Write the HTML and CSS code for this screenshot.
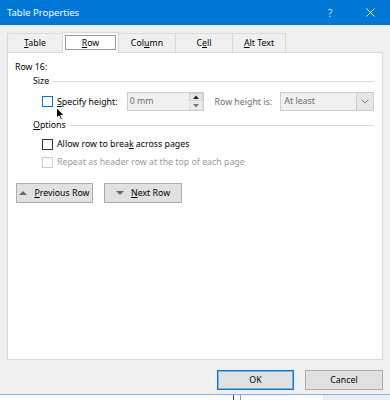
FILE: index.html
```html
<!DOCTYPE html>
<html>
<head>
<meta charset="utf-8">
<link rel="stylesheet" href="styles.css">
</head>
<body>
<div class="dialog">
  <div class="titlebar">
    <span class="title">Table Properties</span>
    <span class="help">?</span>
    <span class="close"><svg width="9" height="9" viewBox="0 0 9 9"><path d="M0.5 0.5L8.5 8.5M8.5 0.5L0.5 8.5" stroke="#fff" stroke-width="1" fill="none"/></svg></span>
  </div>
  <div class="body">
    <div class="tabs">
      <div class="tab t1"><span><u>T</u>able</span></div>
      <div class="tab t2 active"><span class="focus"><u>R</u>ow</span></div>
      <div class="tab t3"><span>Col<u>u</u>mn</span></div>
      <div class="tab t4"><span>C<u>e</u>ll</span></div>
      <div class="tab t5"><span><u>A</u>lt Text</span></div>
    </div>
    <div class="panel">
      <div class="rowlabel">Row 16:</div>
      <div class="group"><span>Size</span><div class="rule"></div></div>
      <div class="sizerow">
        <span class="cb hover"></span>
        <span class="lbl-specify"><u>S</u>pecify height:</span>
        <div class="spin">
          <span class="spin-text">0 mm</span>
          <div class="spin-btns">
            <span class="sb up"><svg width="6" height="4" viewBox="0 0 6 4"><path d="M0 4L3 0.5L6 4Z" fill="#222"/></svg></span>
            <span class="sb down"><svg width="6" height="4" viewBox="0 0 6 4"><path d="M0 0L3 3.5L6 0Z" fill="#777"/></svg></span>
          </div>
        </div>
        <span class="lbl-rhi">Row height is:</span>
        <div class="combo">
          <span class="combo-text">At least</span>
          <span class="combo-btn"><svg width="8" height="5" viewBox="0 0 8 5"><path d="M0.5 0.5L4 4L7.5 0.5" stroke="#777" stroke-width="1" fill="none"/></svg></span>
        </div>
      </div>
      <div class="group opt"><span><u>O</u>ptions</span><div class="rule"></div></div>
      <div class="chkrow first"><span class="cb"></span><span>Allow row to brea<u>k</u> across pages</span></div>
      <div class="chkrow disabled"><span class="cb"></span><span>Repeat as header row at the top of each page</span></div>
      <div class="navrow">
        <div class="btn prev"><svg width="8" height="4" viewBox="0 0 8 4"><path d="M0 4L4 0L8 4Z" fill="#6a6a6a"/></svg><span><u>P</u>revious Row</span></div>
        <div class="btn next"><svg width="8" height="4" viewBox="0 0 8 4"><path d="M0 0L4 4L8 0Z" fill="#6a6a6a"/></svg><span><u>N</u>ext Row</span></div>
      </div>
    </div>
    <div class="footer">
      <div class="btn ok">OK</div>
      <div class="btn cancel">Cancel</div>
    </div>
  </div>
</div>
<div class="under">
  <span class="u1"></span><span class="u2"></span><span class="u3"></span><span class="u4"></span><span class="u5"></span>
</div>
<svg class="cursor" width="10" height="14" viewBox="0 0 10 14"><path d="M0.5 0.5L0.5 11L3 8.8L4.8 12.8L6.4 12.1L4.7 8.3L8 8.3Z" fill="#000" stroke="#fff" stroke-width="1" stroke-linejoin="round"/></svg>
</body>
</html>
```
FILE: styles.css
```css
html, body {
  margin: 0;
  padding: 0;
}
body {
  width: 390px;
  height: 400px;
  overflow: hidden;
  position: relative;
  font-family: "Noto Sans", "Open Sans", sans-serif;
  font-size: 8.8px;
  color: #000;
  background: #fff;
}
u { text-decoration: underline; text-underline-offset: 1px; }

.dialog {
  width: 390px;
  height: 395px;
  box-sizing: border-box;
  background: #f0f0f0;
  border-bottom: 1px solid #7db5ea;
  display: flex;
  flex-direction: column;
}

.titlebar {
  height: 25px;
  flex: none;
  background: #0078d7;
  color: #fff;
  display: flex;
  align-items: center;
  padding-left: 7px;
}
.title { flex: 1; font-size: 9.5px; }
.help {
  width: 30px;
  margin-right: 5px;
  text-align: center;
  font-size: 11px;
  font-family: "Noto Sans", sans-serif;
  font-weight: 300;
}
.close {
  width: 40px;
  height: 25px;
  display: flex;
  align-items: center;
  justify-content: center;
}

.body {
  flex: 1;
  display: flex;
  flex-direction: column;
  padding: 0 7px;
}

.tabs {
  margin-top: 7px;
  height: 20px;
  display: flex;
  align-items: flex-end;
}
.tab {
  height: 19px;
  box-sizing: border-box;
  border: 1px solid #d9d9d9;
  border-bottom: none;
  background: #f0f0f0;
  margin-right: -1px;
  display: flex;
  align-items: center;
  justify-content: center;
}
.t1 { width: 56px; }
.t2 { width: 57px; }
.t3 { width: 58px; }
.t4 { width: 58px; }
.t5 { width: 54px; }
.tab.active {
  height: 21px;
  margin-bottom: -1px;
  background: #fff;
  position: relative;
  z-index: 1;
  align-items: flex-start;
  padding-top: 2px;
}
.focus {
  width: 51px;
  height: 15px;
  box-sizing: border-box;
  border: 1px solid #9a9a9a;
  display: flex;
  align-items: center;
  justify-content: center;
}

.panel {
  height: 308px;
  flex: none;
  box-sizing: border-box;
  background: #fff;
  border: 1px solid #d9d9d9;
  padding: 7px 8px 0 7px;
  display: flex;
  flex-direction: column;
}
.rowlabel { height: 14px; line-height: 14px; }
.group {
  height: 14px;
  line-height: 14px;
  display: flex;
  align-items: center;
  padding-left: 18px;
  gap: 4px;
}
.rule { flex: 1; height: 1px; background: #dcdcdc; }
.group.opt { margin-top: 7px; }

.sizerow {
  margin-top: 4px;
  height: 19px;
  display: flex;
  align-items: center;
  padding-left: 27px;
}
.cb {
  width: 11px;
  height: 11px;
  box-sizing: border-box;
  border: 1px solid #333;
  background: #fff;
  margin-right: 4px;
  flex: none;
}
.cb.hover { border-color: #0078d7; }
.lbl-specify { width: 70px; }
.spin {
  width: 77px;
  height: 19px;
  box-sizing: border-box;
  border: 1px solid #cccccc;
  background: #f0f0f0;
  display: flex;
}
.spin-text {
  flex: 1;
  color: #6d6d6d;
  padding-left: 2px;
  line-height: 17px;
}
.spin-btns {
  width: 14px;
  display: flex;
  flex-direction: column;
  gap: 1px;
}
.sb {
  flex: 1;
  display: flex;
  align-items: center;
  justify-content: center;
  background: #e6e6e6;
  border: 1px solid #d0d0d0;
  box-sizing: border-box;
}
.sb.down { background: #ececec; border-color: #e0e0e0; }
.lbl-rhi { margin-left: 11px; width: 66px; color: #6d6d6d; }
.combo {
  width: 94px;
  height: 19px;
  box-sizing: border-box;
  border: 1px solid #cccccc;
  background: #f0f0f0;
  display: flex;
}
.combo-text {
  flex: 1;
  color: #6d6d6d;
  padding-left: 3px;
  line-height: 17px;
}
.combo-btn {
  width: 16px;
  border-left: 1px solid #cccccc;
  background: #e6e6e6;
  display: flex;
  align-items: center;
  justify-content: center;
}

.chkrow {
  height: 18px;
  display: flex;
  align-items: center;
  padding-left: 27px;
}
.chkrow.first { margin-top: 3px; }
.chkrow.disabled { color: #9a9a9a; }
.chkrow.disabled .cb { border-color: #cccccc; }

.navrow {
  margin-top: 12px;
  display: flex;
  gap: 11px;
  padding-left: 1px;
}
.btn {
  height: 20px;
  box-sizing: border-box;
  background: #e1e1e1;
  border: 1px solid #adadad;
  display: flex;
  align-items: center;
  justify-content: center;
  gap: 7px;
}
.prev { width: 77px; }
.next { width: 78px; }

.footer {
  margin-top: 10px;
  display: flex;
  justify-content: flex-end;
  gap: 11px;
}
.ok {
  width: 77px;
  border-color: #0078d7;
  box-shadow: inset 0 0 0 1px rgba(0, 120, 215, 0.45);
}
.cancel { width: 78px; }

.under {
  height: 5px;
  display: flex;
  background: #fff;
}
.u1 { width: 233px; }
.u2 { width: 1px; background: #444; }
.u3 { width: 6px; }
.u4 { width: 1px; background: #999; }
.u5 { flex: 1; background: linear-gradient(to right, #fff 0, #fff 82px, #ececec 82px); }

.cursor {
  position: absolute;
  left: 56px;
  top: 107px;
}
```
